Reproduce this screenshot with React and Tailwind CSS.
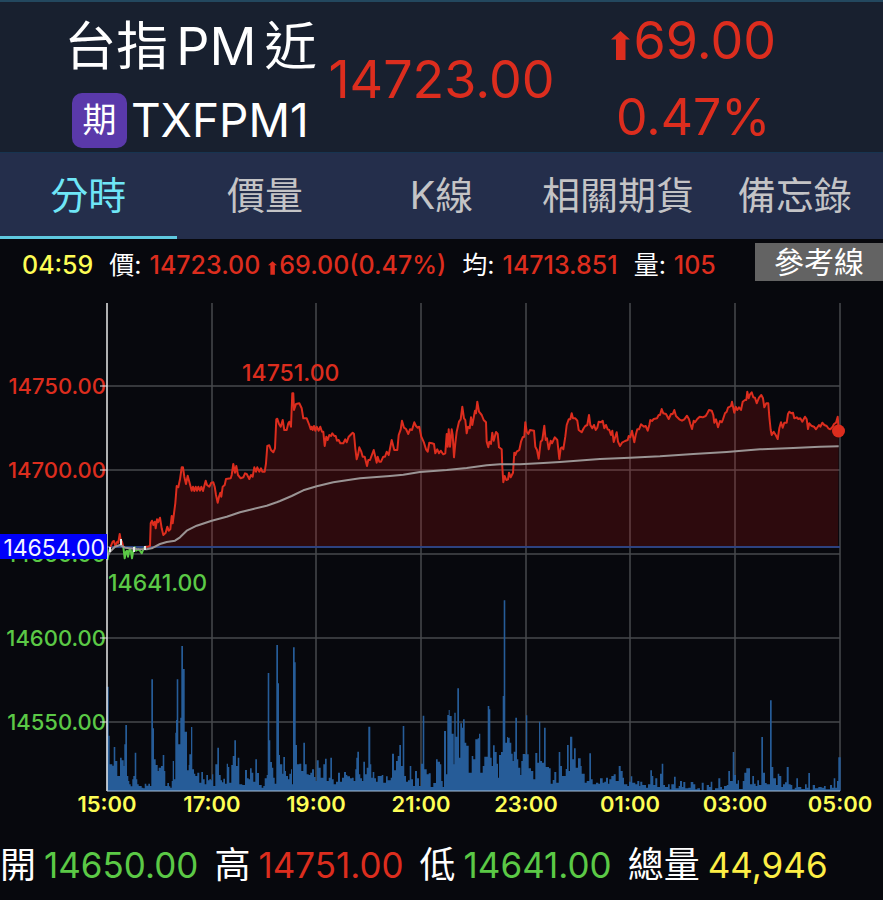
import { useState } from "react";
import clsx from "clsx";

const TABS = ["分時", "價量", "K線", "相關期貨", "備忘錄"];

// Chart samples sit on a 3x grid: x from the left edge, y from the top of the price area.
const PRICE = [
  {
    x0: 0,
    pts: "322,600 327,575 331,562 338,545 342,543 346,558 352,545 355,548 359,522 362,540 366,545 370,560 374,595 378,575 381,572 384,590 388,570 392,570 396,595 400,572 404,562 408,572 415,568 420,572 425,580 430,568 436,560 444,560 450,558 452,490 456,482 460,495 464,485 467,505 471,478 474,487 480,473 485,505 490,525 497,518 502,500 506,512 511,508 515,468 518,490 522,460 526,430 530,378 535,382 540,358 545,322 549,322 553,350 558,372 563,347 568,365 575,392 579,380 583,393 587,380 591,392 595,380 600,392 604,380 609,393 613,378 617,362 621,375 628,380 634,368 640,367 644,380 648,405 653,428 657,410 661,398 664,410 668,380 674,375 678,357 692,355 695,345 700,312 705,338 709,318 714,345 722,355 730,352 735,340 740,342 748,357 753,345 758,350 763,322 768,335 772,322 778,335 783,325 787,335 794,335 798,310 802,258 808,256 813,270 820,277 825,265 829,178 832,176 837,192 842,200 848,180 853,210 860,210 865,190",
  },
  {
    x0: 840,
    pts: "28,185 33,200 37,100 40,100 42,150 48,132 58,130 65,145 70,175 80,175 88,195 92,208 95,200 98,210 102,198 106,212 110,200 116,212 121,200 126,215 130,215 134,258 139,230 143,240 148,225 153,228 157,220 163,228 167,228 171,242 176,240 181,250 190,250 196,238 200,247 206,230 218,218 222,222 226,265 230,298 234,285 238,262 244,275 248,290 254,290 261,318 265,300 270,300 281,270 290,308 293,290 298,305 303,305 310,290 315,290 320,275 326,285 335,240 343,270 352,270 356,225 362,208 366,182 372,203 378,207 385,222 390,208 396,210 403,187 408,198 413,203 418,200 424,230 432,248 438,268 443,275 448,248 456,250 462,252 466,280 472,268 477,280 482,272 490,283 496,280 500,222 503,260 506,208 510,260 515,208 518,225 522,292 526,250 530,215 537,185 542,178 547,140 552,175 556,180 560,220 564,200 569,205 573,172 577,195 585,152 588,160 592,125 597,155 605,165 611,180 618,187 620,245 625,262 628,245 633,252 637,218 641,242 648,216 653,222 657,262 665,268 667,320 670,367 674,348 679,360 684,358 687,338 692,352 699,338 703,278 706,285 710,275 718,270 723,245 728,232 733,230 736,187 740,215 745,222 750,210 762,212 766,260 771,270 776,296 782,245 787,240 793,197 797,240 801,235 806,268 812,242 816,250 824,232 832,240 838,297 842,265 846,262 850,268 856,230 860,195 866,178",
  },
  {
    x0: 1680,
    pts: "28,178 31,178 35,160 39,175 46,175 52,182 56,210 60,213 65,217 71,205 76,198 82,195 87,165 91,195 97,205 102,195 107,210 112,203 116,185 123,187 128,182 133,205 138,195 143,208 148,210 153,225 157,212 161,246 166,230 170,217 174,245 180,258 186,248 195,243 203,240 206,228 211,232 216,212 223,247 227,225 232,208 237,208 243,193 252,200 257,198 263,212 268,195 271,180 276,183 281,177 291,175 296,165 300,165 305,147 310,160 318,162 326,177 333,162 338,162 343,150 348,168 358,178 366,182 373,178 381,167 387,178 391,192 396,207 401,182 405,187 412,177 419,170 428,172 437,168 442,160 447,150 455,152 460,165 463,188 468,178 474,202 480,183 485,187 489,178 495,160 500,155 504,143 513,138 516,125 523,158 527,140 532,150 537,142 543,150 548,125 555,120 559,120 562,95 566,115 570,103 575,97 580,112 585,113 590,130 597,113 604,105 609,115 613,142 619,130 625,130 628,170 632,210 635,225 641,215 647,225 653,237 658,205 663,187 668,203 673,188 680,188 684,162 688,155 694,160 699,158 703,175 710,172 715,177 721,175 727,185 735,170 740,178 744,207 748,190 754,197 762,200 768,208 777,195 781,200 787,188 793,195 800,198 805,205 811,208 818,200 822,192 828,188 833,170 836,210",
  },
];

const AVERAGE = [
  {
    x0: 0,
    pts: "322,588 330,575 345,560 360,555 375,563 410,567 440,568 455,565 480,552 500,546 525,542 540,532 560,512 590,497 635,482 680,470 720,457 760,447 800,437 830,427",
  },
  {
    x0: 840,
    pts: "0,423 35,408 70,391 110,379 160,367 240,355 330,348 370,344 420,336 500,330 560,324 620,316 660,313 720,313 790,309",
  },
  {
    x0: 1680,
    pts: "0,306 120,297 210,293 300,289 400,282 500,276 600,268 700,264 780,260 836,259",
  },
];

// start:height, each level holds until the next start
const VOLUME = [
  {
    x0: 270,
    bars: "50:313 56:166 59:80 67:76 71:132 76:90 82:45 90:100 95:92 101:75 103:140 106:198 111:45 115:30 118:20 122:14 127:35 130:45 134:115 139:35 142:20 146:15 155:10 160:8 164:22 169:16 175:22 180:15 184:335 189:188 192:95 197:78 203:60 206:70 213:75 218:108 223:60 226:15 232:24 237:14 241:10 245:30 248:90 252:35 256:175 258:213 260:335 265:140 271:220 274:435 279:366 284:178 291:62 296:78 298:110 303:192 307:65 312:52 316:45 322:55 328:25 334:57 339:35 344:20 349:48 354:32 358:35 363:32 366:50 370:15 376:80 382:130 387:48 392:32 396:26 400:37 405:22 410:82 414:72 418:25 424:78 428:105 433:152 438:75 443:100 448:20 457:18 465:63 471:38 476:35 480:68 485:55 490:28 496:95 501:54 507:18 515:10 520:15 524:38 530:48 533:354 538:152 541:87 546:70 550:40 554:22 559:438 564:323 567:108 570:80 577:52 580:102 585:60 588:45 594:35 598:52 603:65 606:20 609:431 614:386 617:138 621:80 628:82 634:60 640:145 645:80 650:50 656:48 661:55 666:65 672:42 677:30 680:92 686:70 692:40 700:80 705:97 710:30 716:40 721:100 726:35 731:20 738:28 744:55",
  },
  {
    x0: 1020,
    bars: "0:28 6:40 12:57 18:48 22:44 30:38 36:40 41:30 46:65 49:100 52:118 57:50 61:38 66:30 70:88 75:50 80:70 85:193 91:80 94:40 98:57 103:38 108:28 113:45 125:48 130:25 138:44 143:32 152:40 156:112 162:62 168:90 173:105 178:138 183:75 188:195 193:45 198:28 204:32 209:75 214:35 219:15 225:60 231:38 237:15 243:82 248:226 253:65 260:50 266:53 272:12 280:24 288:95 293:88 300:80 304:30 308:12 312:180 318:50 322:228 326:243 329:225 335:172 341:80 343:235 347:163 352:308 357:100 361:203 366:190 369:215 374:145 379:136 386:55 395:105 400:95 406:155 413:158 417:172 421:55 428:75 433:103 443:255 448:245 451:100 455:75 459:137 464:117 470:82 474:40 477:108 483:117 488:285 491:572 496:145 501:162 504:160 509:145 514:112 518:90 521:118 526:220 531:95 535:70 541:48 544:90 548:111 555:110 558:227 562:110 566:68 573:60 580:35 586:114 592:85 597:208 601:90 606:85 612:190 617:72 627:68 632:22 638:33 643:57 649:25 656:117 661:75 666:45 672:45 677:66 681:138 686:60 690:163 697:95 702:128 707:70 714:98 722:75 725:52 734:25 740:30 748:113 753:35 758:20 768:25 775:22",
  },
  {
    x0: 1800,
    bars: "0:38 8:25 13:28 18:40 24:22 28:35 34:45 41:50 47:30 56:75 62:60 68:40 72:20 82:15 87:28 92:44 97:25 106:20 112:30 118:15 121:28 127:18 138:10 144:20 151:62 156:45 160:18 166:38 172:12 180:52 185:82 190:18 195:12 204:20 209:5 214:20 222:43 227:8 236:15 240:30 246:12 250:27 256:8 265:10 272:27 280:20 286:5 292:8 300:2 305:25 311:2 320:18 327:12 332:28 337:3 345:8 355:38 361:12 366:5 372:15 380:18 385:60 390:30 398:117 403:48 408:22 413:32 417:6 428:30 433:55 439:68 450:20 457:45 462:22 467:15 472:32 477:18 484:162 489:55 495:24 500:20 510:272 515:72 520:38 528:18 533:52 538:45 544:12 549:20 555:26 560:72 566:20 572:18 577:5 584:10 589:38 594:12 604:6 615:20 620:10 625:54 630:4 638:18 645:8 655:12 665:10 672:15 677:5 690:18 696:10 701:38 706:10 711:30 715:101 722:0",
  },
];

const TOP = 303;
const BOTTOM = 791;
const LEFT = 107;
const RIGHT = 840;
const REF_Y = 547;

const HOURS = [
  { x: 107, label: "15:00" },
  { x: 212, label: "17:00" },
  { x: 316, label: "19:00" },
  { x: 421, label: "21:00" },
  { x: 526, label: "23:00" },
  { x: 630, label: "01:00" },
  { x: 735, label: "03:00" },
  { x: 840, label: "05:00" },
];

const LEVELS = [
  { y: 386, label: "14750.00", up: true },
  { y: 470, label: "14700.00", up: true },
  { y: 554, label: "14650.00", up: false },
  { y: 638, label: "14600.00", up: false },
  { y: 722, label: "14550.00", up: false },
];

function toPoints(groups) {
  return groups.flatMap(({ x0, pts }) =>
    pts.split(" ").map((p) => {
      const [x, y] = p.split(",").map(Number);
      return [(x0 + x) / 3, 360 + y / 3];
    })
  );
}

const line = (pts) => "M" + pts.map(([x, y]) => `${x.toFixed(1)} ${y.toFixed(1)}`).join("L");

const pricePts = toPoints(PRICE);
const beforeOpen = pricePts.filter(([x]) => x <= 111);
const firstRise = pricePts.filter(([x]) => x >= 110 && x <= 124);
const below = pricePts.filter(([x]) => x >= 123 && x <= 146);
const mainRun = pricePts.filter(([x]) => x >= 145);
const area = `${line(mainRun)}L838 ${REF_Y}L145 ${REF_Y}Z`;

const volumePath =
  VOLUME.flatMap(({ x0, bars }) =>
    bars.split(" ").map((b) => {
      const [x, h] = b.split(":").map(Number);
      return [(x0 + x) / 3, BOTTOM - h / 3];
    })
  ).reduce((d, [x, y]) => `${d}H${x.toFixed(1)}V${y.toFixed(1)}`, `M${LEFT} ${BOTTOM}`) +
  `V${BOTTOM}Z`;

function UpArrow({ className }) {
  return (
    <svg viewBox="0 0 19 29" className={className} fill="currentColor" aria-hidden="true">
      <path d="M9.500 0L19 8.500H14.500V29H5V8.500H0Z" />
    </svg>
  );
}

function QuoteHeader() {
  return (
    <header className="grid h-[152px] grid-cols-[1fr_auto_1fr] items-center border-t-2 border-[#23485f] bg-[#18202f]">
      <div className="flex flex-col items-center justify-self-end pr-3 text-white">
        <h1 className="text-[52px] leading-[84px] whitespace-nowrap">
          台指<span className="mx-2">PM</span>近
        </h1>
        <div className="flex items-center gap-1">
          <span className="flex size-[55px] items-center justify-center rounded-[10px] bg-[#5a39aa] text-[34px] leading-none">
            期
          </span>
          <span className="text-[46px] leading-[62px]">TXFPM1</span>
        </div>
      </div>
      <p className="pt-1 text-[52px] leading-[64px] text-[#dc2d1e]">14723.00</p>
      <div className="flex flex-col items-center justify-self-start pl-14 text-[#dc2d1e]">
        <p className="flex items-center text-[52px] leading-[78px]">
          <UpArrow className="mt-2 mr-1 h-[29px] w-[19px]" />
          69.00
        </p>
        <p className="text-[50px] leading-[74px]">0.47%</p>
      </div>
    </header>
  );
}

function TabBar() {
  const [active, setActive] = useState("分時");
  return (
    <nav className="grid h-[87px] grid-cols-5 border-t border-[#173450] bg-[#242e4b]">
      {TABS.map((tab) => (
        <button
          key={tab}
          type="button"
          onClick={() => setActive(tab)}
          className={clsx(
            "border-b-[3px] text-[38px] leading-none whitespace-nowrap",
            tab === active ? "border-[#5fc9e0] text-[#6fe6f7]" : "border-transparent text-[#c4c4c6]"
          )}
        >
          {tab}
        </button>
      ))}
    </nav>
  );
}

function InfoRow() {
  return (
    <div className="flex h-[46px] items-center justify-between pl-[22px] text-[25px] font-medium whitespace-nowrap text-[#dc2d1e]">
      <p className="flex items-center gap-2 pt-2">
        <span className="mr-2 text-[#fdfd55]">04:59</span>
        <span className="font-normal text-white">價:</span>
        <span>14723.00</span>
        <span className="flex items-center">
          <UpArrow className="mt-1 mr-0.5 h-[14px] w-[9px]" />
          69.00(0.47%)
        </span>
        <span className="ml-2 font-normal text-white">均:</span>
        <span>14713.851</span>
        <span className="ml-2 font-normal text-white">量:</span>
        <span>105</span>
      </p>
      <button
        type="button"
        className="h-[38px] w-[128px] bg-[#636363] text-[30px] leading-none font-normal text-white"
      >
        參考線
      </button>
    </div>
  );
}

function IntradayChart() {
  return (
    <svg viewBox="0 285 883 541" className="block w-full" role="img" aria-label="台指PM近 分時">
      <g stroke="#47484d" strokeWidth="1.500">
        {HOURS.slice(1).map(({ x }) => (
          <path key={x} d={`M${x} ${TOP}V${BOTTOM}`} />
        ))}
        {LEVELS.map(({ y }) => (
          <path key={y} d={`M${LEFT} ${y}H${RIGHT}`} />
        ))}
      </g>

      <path d={volumePath} fill="#265c98" />
      <path d={area} fill="#dc140f" fillOpacity="0.180" />
      <path d={`M${LEFT} ${REF_Y}H${RIGHT}`} stroke="#2d4280" strokeWidth="2" />

      <g fill="none" strokeLinejoin="round" strokeWidth="2">
        <path d={line(firstRise)} stroke="#dc2d1e" />
        <path d={line(beforeOpen)} stroke="#5bc946" />
        <path d={line(below)} stroke="#5bc946" />
        <path d={line(mainRun)} stroke="#dc2d1e" />
        <path d={line(toPoints(AVERAGE))} stroke="#9a9494" />
        <path d="M110 552V547M121 545V539M134 552V547M145 550V546" stroke="#e8e8e8" />
      </g>
      <circle cx="838.500" cy="431" r="6.500" fill="#dc2d1e" />

      <g className="text-[22px] font-medium" textAnchor="end">
        {LEVELS.map(({ y, label, up }) => (
          <text key={y} x="106" y={y + 8} fill={up ? "#dc2d1e" : "#5bc946"}>
            {label}
          </text>
        ))}
      </g>
      <g stroke="#e8e8e8">
        {LEVELS.map(({ y }) => (
          <path key={y} d={`M100 ${y}H${LEFT}`} />
        ))}
        <path d={`M${LEFT} ${TOP}V${BOTTOM}`} strokeWidth="1.500" />
        <path d={`M${LEFT} ${BOTTOM}H${RIGHT}`} stroke="#a9c2dc" />
      </g>

      <g className="text-[23px] font-medium">
        <text x="242" y="381" fill="#dc2d1e">14751.00</text>
        <text x="108" y="591" fill="#5bc946">14641.00</text>
      </g>

      <rect x="0" y="534" width="107" height="25" fill="#0000fa" />
      <text x="105" y="556" textAnchor="end" fill="#f4f4ff" className="text-[23px]">
        14654.00
      </text>

      <g className="text-[22px] font-semibold" textAnchor="middle" fill="#fdfd55">
        {HOURS.map(({ x, label }) => (
          <text key={label} x={x} y="812">
            {label}
          </text>
        ))}
      </g>
    </svg>
  );
}

function Stat({ label, value, className }) {
  return (
    <div className="flex items-center gap-2">
      <dt className="text-white">{label}</dt>
      <dd className={clsx("text-[35px]", className)}>{value}</dd>
    </div>
  );
}

export default function App() {
  return (
    <main className="min-h-screen bg-[#07080d] font-['Inter','Noto_Sans_CJK_TC',sans-serif]">
      <QuoteHeader />
      <TabBar />
      <InfoRow />
      <IntradayChart />
      <dl className="flex h-[70px] items-center gap-4 pt-2 text-[36px] leading-none whitespace-nowrap">
        <Stat label="開" value="14650.00" className="text-[#5bc946]" />
        <Stat label="高" value="14751.00" className="text-[#dc2d1e]" />
        <Stat label="低" value="14641.00" className="text-[#5bc946]" />
        <Stat label="總量" value="44,946" className="text-[#fdee45]" />
      </dl>
    </main>
  );
}
